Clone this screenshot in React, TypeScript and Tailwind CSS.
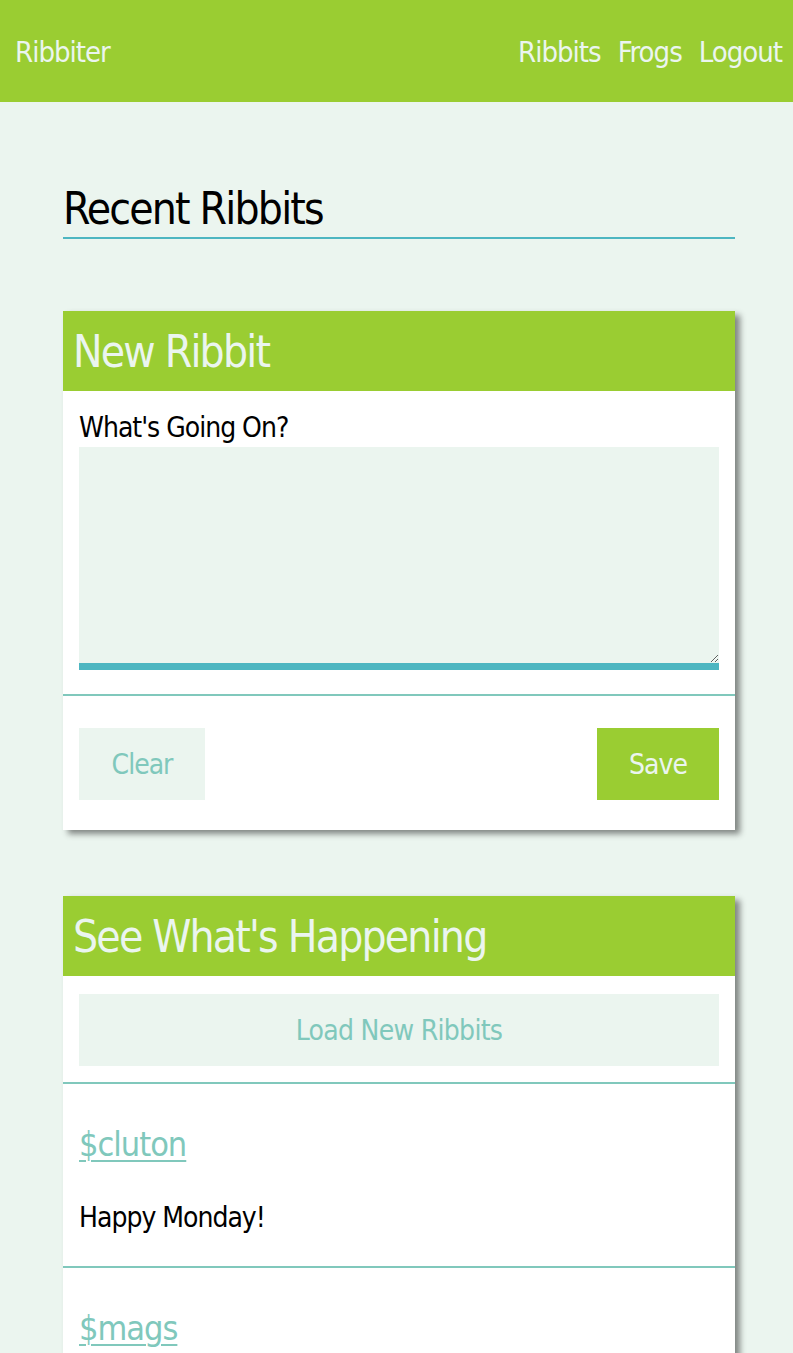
import React from 'react';

const font = 'font-["DejaVu_Sans_Condensed","Liberation_Sans_Narrow","Open_Sans",sans-serif]';

interface Ribbit {
  user: string;
  text?: string;
}

const ribbits: Ribbit[] = [
  { user: '$cluton', text: 'Happy Monday!' },
  { user: '$mags' },
];

function Card({ title, children }: { title: string; children: React.ReactNode }) {
  return (
    <section className="bg-white shadow-[5px_4px_6px_rgba(0,0,0,0.45)]">
      <h2 className="h-[80px] bg-[#9acd32] px-[10px] pt-[15px] text-[44px] leading-[52px] tracking-[-1.8px] text-[#ebf5ef]">
        {title}
      </h2>
      {children}
    </section>
  );
}

export default function App() {
  return (
    <div className={`min-h-[1353px] bg-[#ebf5ef] ${font}`}>
      {/* Header */}
      <header className="flex h-[102px] items-center justify-between bg-[#9acd32] pl-[15px] pr-[11px] pt-[3px] text-[29px] tracking-[-1px] text-[#ebf5ef]">
        <span>Ribbiter</span>
        <nav className="flex gap-[17px]">
          <a>Ribbits</a>
          <a>Frogs</a>
          <a>Logout</a>
        </nav>
      </header>

      <main className="ml-[63px] mr-[58px] pt-[80px]">
        <h1 className="border-b-2 border-[#4db6c1] pb-[1px] text-[44px] leading-[54px] tracking-[-1.8px] text-black">
          Recent Ribbits
        </h1>

        <div className="mt-[72px] flex flex-col gap-[66px]">
          <Card title="New Ribbit">
            <div className="px-[16px] pt-[18px] pb-[24px]">
              <label className="block text-[28px] leading-[38px] tracking-[-1px] text-black">What's Going On?</label>
              <textarea className="block h-[223px] w-full resize-y border-b-[7px] border-[#4db6c1] bg-[#ebf5ef] outline-none" />
            </div>
            <div className="flex items-center justify-between border-t-2 border-[#80c8bc] px-[16px] pt-[32px] pb-[30px]">
              <button className="h-[72px] w-[126px] bg-[#ebf5ef] pt-[2px] text-[28px] tracking-[-1px] text-[#80c8bc]">Clear</button>
              <button className="h-[72px] w-[122px] bg-[#9acd32] pt-[2px] text-[28px] tracking-[-1px] text-[#ebf5ef]">Save</button>
            </div>
          </Card>

          <Card title="See What's Happening">
            <div className="border-b-2 border-[#80c8bc] px-[16px] pt-[18px] pb-[16px]">
              <button className="h-[72px] w-full bg-[#ebf5ef] pt-[2px] text-[28px] tracking-[-0.7px] text-[#80c8bc]">Load New Ribbits</button>
            </div>
            {ribbits.map((r) => (
              <article key={r.user} className="border-b-2 border-[#80c8bc] px-[16px] pt-[40px] pb-[28px]">
                <a className="text-[34px] leading-[40px] tracking-[-1px] text-[#80c8bc] underline decoration-2 underline-offset-4">
                  {r.user}
                </a>
                {r.text && <p className="mt-[34px] text-[28px] leading-[40px] tracking-[-1px] text-black">{r.text}</p>}
              </article>
            ))}
          </Card>
        </div>
      </main>
    </div>
  );
}
